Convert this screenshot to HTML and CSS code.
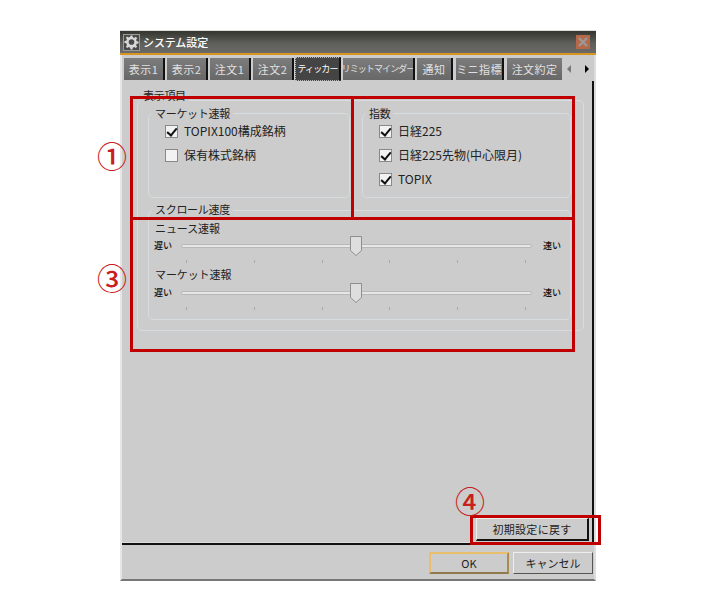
FILE: index.html
```html
<!DOCTYPE html>
<html lang="ja">
<head>
<meta charset="utf-8">
<title>システム設定</title>
<link rel="stylesheet" href="styles.css">
</head>
<body>
<div class="window">
  <header class="titlebar">
    <span class="app-icon">
      <svg viewBox="0 0 16 16" width="16" height="16"><path fill="#d8d8d8" d="M7 1h2l.4 2 1.5.6 1.7-1.1 1.4 1.4-1.1 1.7.6 1.5 2 .4v2l-2 .4-.6 1.5 1.1 1.7-1.4 1.4-1.7-1.1-1.5.6-.4 2H7l-.4-2-1.5-.6-1.7 1.1-1.4-1.4 1.1-1.7L2.5 9.400.5 9V7l2-.4.6-1.500L2 3.400 3.400 2l1.700 1.100 1.500-.6z"/><circle cx="8" cy="8" r="3" fill="#4a4a4a"/></svg>
    </span>
    <span class="title-text">システム設定</span>
    <span class="close">
      <svg viewBox="0 0 14 14" width="14" height="14"><path d="M3 3l8 8M11 3l-8 8" stroke="#9a9a96" stroke-width="2.400"/></svg>
    </span>
  </header>
  <nav class="tabs">
    <span class="tab w41">表示1</span>
    <span class="tab w41">表示2</span>
    <span class="tab w41">注文1</span>
    <span class="tab w41">注文2</span>
    <span class="tab active">ティッカー</span>
    <span class="tab w72 small">リミットマインダー</span>
    <span class="tab w36">通知</span>
    <span class="tab w48">ミニ指標</span>
    <span class="tab w55">注文約定</span>
    <span class="arrows">
      <svg viewBox="0 0 8 10" width="8" height="10"><path d="M6 1v8L2 5z" fill="#777"/></svg>
      <svg viewBox="0 0 8 10" width="8" height="10"><path d="M2 1v8l4-4z" fill="#000"/></svg>
    </span>
  </nav>
  <main class="panel">
    <section class="group outer">
      <div class="legend legend-outer">表示項目</div>
      <div class="top-groups">
        <section class="group market">
          <div class="legend">マーケット速報</div>
          <label class="check"><span class="box on"></span><span>TOPIX100構成銘柄</span></label>
          <label class="check"><span class="box"></span><span>保有株式銘柄</span></label>
        </section>
        <section class="group index">
          <div class="legend">指数</div>
          <label class="check"><span class="box on"></span><span>日経225</span></label>
          <label class="check"><span class="box on"></span><span>日経225先物(中心限月)</span></label>
          <label class="check"><span class="box on"></span><span>TOPIX</span></label>
        </section>
      </div>
      <section class="group speed">
        <div class="legend">スクロール速度</div>
        <div class="slider-title">ニュース速報</div>
        <div class="slider-row">
          <span class="end">遅い</span>
          <div class="track"><svg class="thumb" viewBox="0 0 12 20" width="12" height="20"><path d="M.5.500h11v14L6 19.500.5 14.500z" fill="#dedede" stroke="#8e8e8e"/></svg></div>
          <span class="end">速い</span>
        </div>
        <div class="ticks"><i></i><i></i><i></i><i></i><i></i><i></i></div>
        <div class="slider-title second">マーケット速報</div>
        <div class="slider-row">
          <span class="end">遅い</span>
          <div class="track"><svg class="thumb" viewBox="0 0 12 20" width="12" height="20"><path d="M.5.500h11v14L6 19.500.5 14.500z" fill="#dedede" stroke="#8e8e8e"/></svg></div>
          <span class="end">速い</span>
        </div>
        <div class="ticks"><i></i><i></i><i></i><i></i><i></i><i></i></div>
      </section>
    </section>
    <div class="reset-row"><button class="btn reset">初期設定に戻す</button></div>
  </main>
  <footer class="footer">
    <button class="btn ok">OK</button>
    <button class="btn cancel">キャンセル</button>
  </footer>
</div>

<div class="mark box-main"></div>
<div class="mark divider-v"></div>
<div class="mark divider-h"></div>
<div class="mark box-reset"></div>
<span class="num n1">①</span>
<span class="num n3">③</span>
<span class="num n4">④</span>
</body>
</html>
```
FILE: styles.css
```css
* { box-sizing: border-box; }
html, body { margin: 0; background: #fff; }
body {
  position: relative;
  width: 712px;
  height: 611px;
  padding: 30px 0 0 120px;
  font: 11px/14px "Noto Sans CJK JP", "Noto Sans", sans-serif;
  color: #222;
  overflow: hidden;
}
.window {
  width: 476px;
  height: 551px;
  display: flex;
  flex-direction: column;
  background: #ccc;
  border-left: 2px solid #e6e6e6;
  border-right: 2px solid #ddd;
  border-bottom: 2px solid #777;
  border-top: 1px solid #ddd;
}

/* title bar */
.titlebar {
  height: 24px;
  margin-left: -2px;
  margin-right: -2px;
  display: flex;
  align-items: center;
  padding: 0 5px 0 3px;
  background: linear-gradient(#35352f, #5e5e5a 55%, #6a6a66);
  border-bottom: 2px solid #d9951f;
  color: #fff;
}
.app-icon {
  width: 17px;
  height: 17px;
  display: flex;
  align-items: center;
  justify-content: center;
  background: #4a4a4a;
  border: 1px solid #999;
}
.title-text { margin-left: 3px; font-size: 11px; font-weight: 500; letter-spacing: -.1px; flex: 1; }
.close {
  width: 14px;
  height: 14px;
  margin-right: 1px;
  background: #b5694a;
  display: flex;
}

/* tabs */
.tabs {
  height: 26px;
  display: flex;
  align-items: flex-end;
  gap: 2px;
  padding: 0 0 0 2px;
  background: #ccc;
}
.tab {
  flex: none;
  height: 22px;
  margin-bottom: 1px;
  display: flex;
  align-items: center;
  justify-content: center;
  background: linear-gradient(#7c7c7c, #686868);
  border-right: 2px solid #111;
  color: #e0e0e0;
  font-size: 11px;
  white-space: nowrap;
  letter-spacing: .4px;
  overflow: hidden;
}
.w41 { width: 41px; }
.w72 { width: 72px; }
.w36 { width: 36px; }
.w48 { width: 48px; margin-left: 1px; }
.w55 { width: 55px; margin-left: 1px; border-right: 0; }
.small { font-size: 9px; letter-spacing: -.9px; }
.active {
  width: 46px;
  height: 24px;
  margin: 0 0 0 -1px;
  background: #444;
  border: 1px dotted #bbb;
  border-right: 2px solid #111;
  color: #fff;
  font-size: 9px;
  letter-spacing: -.9px;
}
.arrows {
  flex: none;
  margin: 0 0 1px 1px;
  width: 26px;
  height: 22px;
  display: flex;
  align-items: center;
  justify-content: space-between;
}

/* panel */
.panel {
  flex: 1;
  display: flex;
  flex-direction: column;
  justify-content: space-between;
  padding: 19px 0 2px 15px;
  border-right: 2px solid #111;
  border-bottom: 2px solid #111;
  box-shadow: inset 0 -1px 0 #ddd;
}
.group {
  border: 1px solid #d6dce0;
  border-radius: 5px;
}
.legend {
  width: fit-content;
  height: 13px;
  margin: -8px 0 0 3px;
  padding: 0 3px;
  background: #ccc;
  font-size: 11px;
  letter-spacing: -.3px;
}
.legend-outer { margin: -13px 0 0 -8px; height: 14px; }
.outer {
  width: 447px;
  height: 231px;
  padding: 0 11px 0 10px;
}
.top-groups {
  display: flex;
  gap: 12px;
  margin-top: 11px;
}
.market { width: 202px; height: 85px; padding-left: 16px; }
.index { width: 209px; height: 85px; padding-left: 16px; }
.market .legend { margin-left: -13px; }
.index .legend { margin-left: -13px; }
.check {
  display: flex;
  align-items: center;
  gap: 6px;
  height: 24px;
  font-size: 12px;
  letter-spacing: 0;
}
.box {
  width: 13px;
  height: 13px;
  background: #f2f2f2;
  border: 1px solid #888;
  position: relative;
}
.box.on::after {
  content: "";
  position: absolute;
  left: 3px;
  top: 0;
  width: 4px;
  height: 8px;
  border: solid #111;
  border-width: 0 2px 2px 0;
  transform: rotate(40deg);
}
.speed {
  width: 423px;
  height: 110px;
  margin-top: 12px;
  padding: 0 9px 0 5px;
}
.speed .legend { margin: -9px 0 0 -2px; height: 14px; }
.slider-title { margin-top: 5px; padding-left: 1px; height: 14px; font-size: 11px; letter-spacing: -.1px; }
.slider-title.second { margin-top: 3px; height: 15px; }
.slider-row {
  display: flex;
  align-items: center;
  height: 20px;
  margin-top: 1px;
}
.end { flex: none; width: 18px; font-size: 9px; font-weight: 500; color: #111; white-space: nowrap; }
.track {
  position: relative;
  flex: 1;
  height: 4px;
  margin: 0 11px 0 9px;
  background: #e6e6e6;
  border: 1px solid #b8b8b8;
  border-radius: 2px;
}
.thumb { position: absolute; left: 168px; top: -9px; }
.ticks {
  display: flex;
  justify-content: space-between;
  padding: 0 35px 0 32px;
  height: 4px;
  margin-top: 4px;
}
.ticks i { width: 1px; height: 3px; background: #aaa; }

.reset-row { display: flex; justify-content: flex-end; padding-right: 3px; }
.btn {
  font: 11px/14px "Noto Sans CJK JP", "Noto Sans", sans-serif;
  color: #222;
  background: #ccc;
  border: 1px solid #eee;
  border-right-color: #555;
  border-bottom-color: #555;
  padding: 0;
  width: 80px;
  height: 22px;
}
.reset {
  width: 113px;
  height: 23px;
  border-right: 2px solid #111;
  border-bottom: 2px solid #111;
  letter-spacing: .3px;
}
.footer {
  flex: 1;
  max-height: 34px;
  display: flex;
  justify-content: flex-end;
  gap: 4px;
  padding: 7px 1px 0 0;
}
.ok { border: 2px solid #e9bf6e; border-bottom-color: #8f7a4d; border-right-color: #a98c4f; }

/* annotations */
.mark { position: absolute; border: 0 solid #c00000; }
.box-main { left: 130px; top: 96px; width: 445px; height: 256px; border-width: 3px; }
.divider-v { left: 351px; top: 96px; width: 3px; height: 123px; background: #c00000; }
.divider-h { left: 130px; top: 217px; width: 445px; height: 3px; background: #c00000; }
.box-reset { left: 470px; top: 515px; width: 131px; height: 30px; border-width: 3px; }
.num {
  position: absolute;
  color: #c8201c;
  font: 500 30px/30px "Noto Sans CJK JP", sans-serif;
}
.n1 { left: 97px; top: 140px; }
.n3 { left: 97px; top: 262px; }
.n4 { left: 455px; top: 485px; }
```
